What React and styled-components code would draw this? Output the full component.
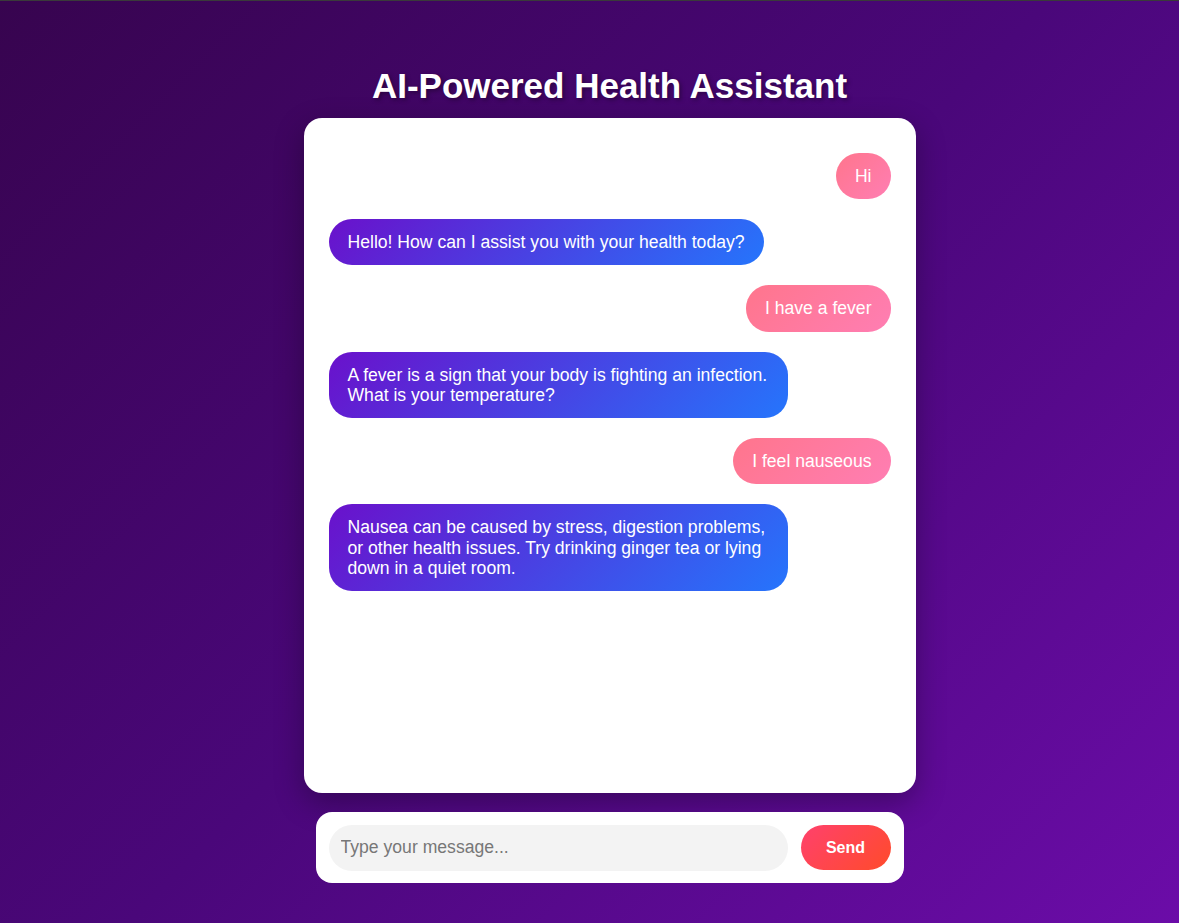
import styled, { createGlobalStyle } from "styled-components";

const GlobalStyle = createGlobalStyle`
  * { box-sizing: border-box; }
  html, body {
    margin: 0;
    padding: 0;
  }
  body {
    font-family: "Liberation Sans", Arial, sans-serif;
    border-top: 1px solid #3a3a3a;
  }
`;

const Page = styled.div`
  min-height: calc(100vh - 1px);
  background: linear-gradient(135deg, #37044f 0%, #4a077a 50%, #6b0ca8 100%);
  display: flex;
  flex-direction: column;
  align-items: center;
  padding: 65px 0 0 40px;
`;

const Title = styled.h1`
  margin: 0 0 12px;
  font-size: 35px;
  font-weight: 700;
  color: #fff;
  text-shadow: 2px 2px 4px rgba(0, 0, 0, 0.35);
`;

const ChatBox = styled.div`
  width: 612px;
  height: 675px;
  background: #fff;
  border-radius: 18px;
  box-shadow: 0 10px 30px rgba(0, 0, 0, 0.3);
  padding: 35px 25px 25px;
  display: flex;
  flex-direction: column;
  gap: 20px;
`;

const Bubble = styled.div`
  align-self: ${(p) => (p.$user ? "flex-end" : "flex-start")};
  max-width: 459px;
  padding: 13px 19px;
  border-radius: 23px;
  font-size: 17.6px;
  line-height: 1.15;
  color: #fff;
  background: ${(p) =>
    p.$user
      ? "linear-gradient(135deg, #ff758c, #ff7eb3)"
      : "linear-gradient(135deg, #6a11cb, #2575fc)"};
`;

const InputBar = styled.div`
  margin-top: 19px;
  width: 588px;
  height: 71px;
  background: #fff;
  border-radius: 16px;
  display: flex;
  align-items: center;
  gap: 13px;
  padding: 0 13px;
`;

const Input = styled.input`
  width: 459px;
  height: 46px;
  border: none;
  outline: none;
  border-radius: 23px;
  background: #f3f3f3;
  padding: 0 12px;
  font-family: "Liberation Sans", Arial, sans-serif;
  font-size: 17.6px;
  color: #333;
  &::placeholder {
    color: #777;
  }
`;

const SendButton = styled.button`
  width: 90px;
  height: 45px;
  border: none;
  border-radius: 23px;
  background: linear-gradient(135deg, #ff416c, #ff4b2b);
  color: #fff;
  font-family: "Liberation Sans", Arial, sans-serif;
  font-size: 16px;
  font-weight: 700;
  cursor: pointer;
`;

const messages = [
  { user: true, text: "Hi" },
  { user: false, text: "Hello! How can I assist you with your health today?" },
  { user: true, text: "I have a fever" },
  {
    user: false,
    text: "A fever is a sign that your body is fighting an infection. What is your temperature?",
  },
  { user: true, text: "I feel nauseous" },
  {
    user: false,
    text: "Nausea can be caused by stress, digestion problems, or other health issues. Try drinking ginger tea or lying down in a quiet room.",
  },
];

export default function App() {
  return (
    <>
      <GlobalStyle />
      <Page>
        <Title>AI-Powered Health Assistant</Title>
        <ChatBox>
          {messages.map((m, i) => (
            <Bubble key={i} $user={m.user}>
              {m.text}
            </Bubble>
          ))}
        </ChatBox>
        <InputBar>
          <Input placeholder="Type your message..." autoFocus />
          <SendButton>Send</SendButton>
        </InputBar>
      </Page>
    </>
  );
}
